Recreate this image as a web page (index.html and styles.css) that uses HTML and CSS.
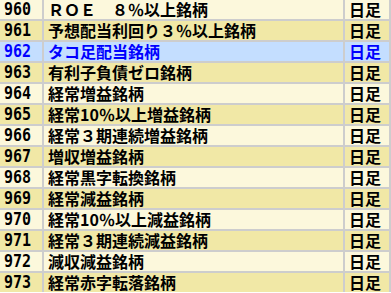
FILE: index.html
```html
<!DOCTYPE html>
<html lang="ja">
<head>
<meta charset="utf-8">
<link rel="stylesheet" href="styles.css">
</head>
<body>
<div class="grid">
  <div class="row odd0"><div class="num"><span>960</span></div><div class="name">ＲＯＥ　８％以上銘柄</div><div class="kind">日足</div></div>
  <div class="row odd1"><div class="num"><span>961</span></div><div class="name">予想配当利回り３％以上銘柄</div><div class="kind">日足</div></div>
  <div class="row sel"><div class="num"><span>962</span></div><div class="name">タコ足配当銘柄</div><div class="kind">日足</div></div>
  <div class="row odd1"><div class="num"><span>963</span></div><div class="name">有利子負債ゼロ銘柄</div><div class="kind">日足</div></div>
  <div class="row odd0"><div class="num"><span>964</span></div><div class="name">経常増益銘柄</div><div class="kind">日足</div></div>
  <div class="row odd1"><div class="num"><span>965</span></div><div class="name">経常10％以上増益銘柄</div><div class="kind">日足</div></div>
  <div class="row odd0"><div class="num"><span>966</span></div><div class="name">経常３期連続増益銘柄</div><div class="kind">日足</div></div>
  <div class="row odd1"><div class="num"><span>967</span></div><div class="name">増収増益銘柄</div><div class="kind">日足</div></div>
  <div class="row odd0"><div class="num"><span>968</span></div><div class="name">経常黒字転換銘柄</div><div class="kind">日足</div></div>
  <div class="row odd1"><div class="num"><span>969</span></div><div class="name">経常減益銘柄</div><div class="kind">日足</div></div>
  <div class="row odd0"><div class="num"><span>970</span></div><div class="name">経常10％以上減益銘柄</div><div class="kind">日足</div></div>
  <div class="row odd1"><div class="num"><span>971</span></div><div class="name">経常３期連続減益銘柄</div><div class="kind">日足</div></div>
  <div class="row odd0"><div class="num"><span>972</span></div><div class="name">減収減益銘柄</div><div class="kind">日足</div></div>
  <div class="row odd1"><div class="num"><span>973</span></div><div class="name">経常赤字転落銘柄</div><div class="kind">日足</div></div>
</div>
</body>
</html>
```
FILE: styles.css
```css
html, body {
  margin: 0;
  padding: 0;
  background: #ffffff;
  overflow: hidden;
}
.grid {
  width: 389px;
  padding-right: 2px;
  display: flex;
  flex-direction: column;
  gap: 2px;
  background: #cdcdcd;
}
.row {
  display: grid;
  grid-template-columns: 42px 299px 1fr;
  column-gap: 2px;
  height: 19px;
}
.row > div {
  padding-left: 4px;
  line-height: 19px;
  white-space: nowrap;
  overflow: hidden;
  color: #000;
}
.odd0 > div { background: #fcf8dc; }
.odd1 > div { background: #f1e8a6; }
.sel > div { background: #c4deff; color: #0000ff; }
.num {
  font-family: "DejaVu Sans Mono", "Liberation Mono", monospace;
  font-weight: bold;
  font-size: 15px;
}
.num span {
  display: inline-block;
  transform: scaleY(1.12);
}
.name, .kind {
  font-family: "Noto Sans CJK JP", sans-serif;
  font-weight: bold;
  font-size: 16px;
}
```
